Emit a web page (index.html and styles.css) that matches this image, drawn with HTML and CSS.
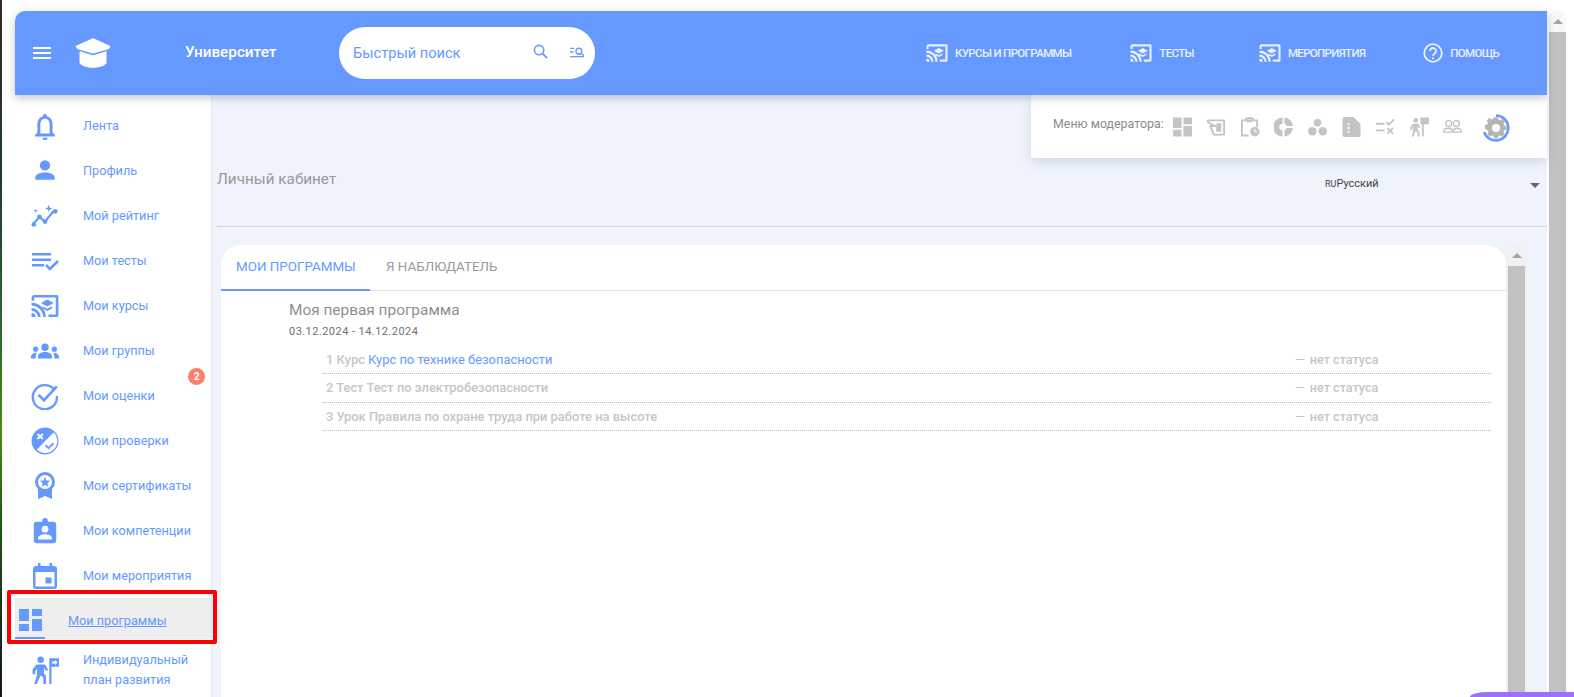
FILE: index.html
```html
<!DOCTYPE html>
<html lang="ru">
<head>
<meta charset="utf-8">
<title>Университет</title>
<link rel="stylesheet" href="styles.css">
</head>
<body>
<svg class="defs" width="0" height="0" aria-hidden="true">
  <symbol id="cast" viewBox="0 0 24 24"><path d="M3 2.500h19a1.500 1.500 0 0 1 1.500 1.500v16a1.500 1.500 0 0 1-1.500 1.500h-7v-2.300h6.200V4.800H2.800v2.700H.5V5A2.500 2.500 0 0 1 3 2.500z"/><path d="M.5 9.300A12.200 12.200 0 0 1 12.700 21.500h-2.400A9.800 9.800 0 0 0 .5 11.700zM.5 13.700a7.800 7.800 0 0 1 7.800 7.800H5.900A5.400 5.400 0 0 0 .5 16.100zM.5 18a3.500 3.500 0 0 1 3.500 3.500H.5z"/><path d="M14 6.500l5.500 3-5.500 3-5.500-3z"/><path d="M10 12.200l4 2.200 4-2.200v1.900l-4 2.200-4-2.200z"/></symbol>
</svg>
<div class="edge"></div>
<div class="window">
  <header class="topbar">
    <button class="burger" aria-label="Меню"><span></span><span></span><span></span></button>
    <svg class="logo" viewBox="0 0 36 30"><path fill="#fff" stroke="#fff" stroke-width="1.500" stroke-linejoin="round" d="M18 1L34.500 8.500 33 10.500 18 14.800 3 10.500 1.500 8.500z"/><path fill="#fff" stroke="#fff" stroke-width="1" stroke-linejoin="round" d="M5 13.800L18 17.800l13-4v11.500c-3 3-8.500 4-13 4s-10-1-13-4z"/></svg>
    <div class="brand">Университет</div>
    <div class="search">
      <span class="search-text">Быстрый поиск</span>
      <svg class="search-ico" viewBox="0 0 16 16"><circle cx="6.500" cy="6.500" r="5" fill="none" stroke="#6699ff" stroke-width="1.700"/><path d="M10.300 10.300L15 15" stroke="#6699ff" stroke-width="2"/></svg>
      <svg class="search-ico2" viewBox="0 0 16 12"><path d="M0 1.500h4.500M0 5.500h3.500M0 10.500h15" stroke="#6699ff" stroke-width="1.500"/><circle cx="9.500" cy="4.500" r="3.200" fill="none" stroke="#6699ff" stroke-width="1.500"/><path d="M11.800 6.800L15 9.500" stroke="#6699ff" stroke-width="1.700"/></svg>
    </div>
    <nav class="topnav">
      <a class="nav-a"><svg class="nav-ico"><use href="#cast"/></svg>КУРСЫ И ПРОГРАММЫ</a>
      <a class="nav-b"><svg class="nav-ico"><use href="#cast"/></svg>ТЕСТЫ</a>
      <a class="nav-c"><svg class="nav-ico"><use href="#cast"/></svg>МЕРОПРИЯТИЯ</a>
      <a class="nav-d"><svg class="nav-help" viewBox="0 0 20 20"><circle cx="10" cy="10" r="8.800" fill="none" stroke="currentColor" stroke-width="1.800"/><path d="M7 8a3 3 0 1 1 4.500 2.600c-1 .6-1.500 1-1.500 2.400" fill="none" stroke="currentColor" stroke-width="1.800"/><circle cx="10" cy="15.300" r="1.100" fill="currentColor"/></svg>ПОМОЩЬ</a>
    </nav>
  </header>
  <div class="body-row">
    <aside class="sidebar">
      <a class="item"><span class="ico"><svg viewBox="0 0 24 24"><path d="M12 1.500a1.600 1.600 0 0 1 1.600 1.600v.6C17 4.600 18.500 7.500 18.500 11v6.500l2 2V21h-17v-1.500l2-2V11c0-3.500 1.500-6.400 4.900-7.300v-.6A1.600 1.600 0 0 1 12 1.500zM8 18.500h8V11c0-3-1.300-5.200-4-5.200S8 8 8 11zM10 22h4a2 2 0 0 1-4 .6z"/></svg></span>Лента</a>
      <a class="item"><span class="ico"><svg viewBox="-3 -3 30 30"><circle cx="12" cy="6" r="5.500"/><path d="M1.500 21.500v-2C1.500 15 7 13.500 12 13.500s10.500 1.500 10.500 6v2z"/></svg></span>Профиль</a>
      <a class="item"><span class="ico"><svg viewBox="0 0 30 24"><path d="M2 21l7-8 6 5 9-11" fill="none" stroke="#6699ff" stroke-width="2.400"/><circle cx="3" cy="21" r="2.500"/><circle cx="9" cy="13" r="2.500"/><circle cx="15" cy="18" r="2.500"/><circle cx="26" cy="7" r="2.500"/><path d="M19 0l1 3 3 1-3 1-1 3-1-3-3-1 3-1zM5 4l.6 1.900 1.900.6-1.900.6L5 9l-.6-1.900-1.900-.6 1.900-.6z"/></svg></span>Мой рейтинг</a>
      <a class="item"><span class="ico"><svg viewBox="0 0 28 20"><path d="M1 2h19v2.500H1zM1 7.500h19V10H1zM1 13h12v2.500H1z"/><path d="M15 14l4 4 8-8" fill="none" stroke="#6699ff" stroke-width="2.600"/></svg></span>Мои тесты</a>
      <a class="item"><span class="ico ico-wide"><svg><use href="#cast"/></svg></span>Мои курсы</a>
      <a class="item"><span class="ico"><svg viewBox="0 0 30 16"><circle cx="15" cy="4" r="4"/><circle cx="5" cy="6" r="2.800"/><circle cx="25" cy="6" r="2.800"/><path d="M7.500 16v-2c0-3 3.500-4.800 7.500-4.800s7.500 1.800 7.500 4.800v2zM0 16v-1.500C0 12 2.500 10 5.500 10c.7 0 .5 1-.5 3v3zM30 16v-1.500C30 12 27.500 10 24.500 10c-.7 0-.5 1 .5 3v3z"/></svg></span>Мои группы</a>
      <a class="item"><span class="ico"><svg viewBox="0 0 26 26"><path d="M21.500 7A11.200 11.200 0 1 0 24 13" fill="none" stroke="#6699ff" stroke-width="2.200"/><path d="M7 12l5 5L24 4" fill="none" stroke="#6699ff" stroke-width="2.500"/></svg></span>Мои оценки<span class="badge">2</span></a>
      <a class="item"><span class="ico"><svg viewBox="0 0 26 26"><circle cx="13" cy="13" r="12.500"/><path d="M5.500 21L21 5A11 11 0 0 1 5.500 21z" fill="#fff"/><path d="M6 6.500l5 4.500M11 6.500L6 11" stroke="#fff" stroke-width="1.800"/><path d="M13.500 17l2.800 2.600L21 15" fill="none" stroke="#6699ff" stroke-width="1.800"/></svg></span>Мои проверки</a>
      <a class="item"><span class="ico"><svg viewBox="0 0 22 28"><path d="M4 17v10l7-3 7 3V17z"/><circle cx="11" cy="10" r="8.500" fill="#fff" stroke="#6699ff" stroke-width="3"/><path d="M11 5l1.500 3.400 3.700.3-2.800 2.400.9 3.600-3.300-1.900-3.300 1.900.9-3.600-2.800-2.400 3.700-.3z"/></svg></span>Мои сертификаты</a>
      <a class="item"><span class="ico"><svg viewBox="-2 -2 28 30"><path d="M3 3h6V2a3 3 0 0 1 6 0v1h6a3 3 0 0 1 3 3v17a3 3 0 0 1-3 3H3a3 3 0 0 1-3-3V6a3 3 0 0 1 3-3z"/><circle cx="12" cy="11" r="3.600" fill="#fff"/><path d="M4.500 22v-1.500c0-2.500 4.500-4 7.500-4s7.500 1.500 7.500 4V22z" fill="#fff"/></svg></span>Мои компетенции</a>
      <a class="item"><span class="ico"><svg viewBox="-2 -1 28 28"><path d="M5 0h2.500v3h9V0H19v3h2a3 3 0 0 1 3 3v17a3 3 0 0 1-3 3H3a3 3 0 0 1-3-3V6a3 3 0 0 1 3-3h2zM2.500 9v14.500h19V9z"/><path d="M12.500 14.500h6v6h-6z"/></svg></span>Мои мероприятия</a>
      <a class="item active"><span class="ico-active"><svg viewBox="0 0 23 22"><path d="M0 0h10v12H0zM13 0h10v7H13zM13 10h10v12H13zM0 15h10v7H0z"/></svg></span><span class="active-label">Мои программы</span></a>
      <a class="item two"><span class="ico"><svg viewBox="0 0 26 26"><circle cx="9" cy="3.500" r="3"/><path d="M5 8h8l3 5-2 1-2-3v5l2 2.500V26h-2.500v-6L9 18l-1.500 3-2 5H3l2.500-8V12L4 14v3H1.500v-4.500z"/><path d="M17 2h9v8h-7v16h-2z"/><path d="M19.500 5h3v-1.500l2 2.500-2 2.500V7h-3z" fill="#fff"/></svg></span><span class="two-text">Индивидуальный<br>план развития</span></a>
    </aside>
    <main class="main">
      <div class="mod-menu">
        <span class="mod-label">Меню модератора:</span>
        <svg class="m m1" viewBox="0 0 20 20"><path d="M0 0h9v11H0zM11 0h9v7h-9zM11 9h9v11h-9zM0 13h9v7H0z"/></svg>
        <svg class="m m2" viewBox="0 0 20 20"><path d="M1 3h17v15H7L3.500 9H9L1 5z" fill="none" stroke="#c4c4c4" stroke-width="2" stroke-linejoin="round"/><path d="M10 6h5v9H9.500z"/></svg>
        <svg class="m m3" viewBox="0 0 20 20"><path d="M1 3h4a4 2.500 0 0 1 8 0h4v7M1 2v17h7" fill="none" stroke="#c4c4c4" stroke-width="2"/><path d="M6 2h6v3H6z"/><circle cx="14.500" cy="15" r="5"/><path d="M14.500 12v3h2.500" stroke="#fff" fill="none"/></svg>
        <svg class="m m4" viewBox="0 0 20 20"><path d="M9 0v6.500A3.500 3.500 0 0 0 9 13.500V20A10 10 0 0 1 9 0zM11 0a10 10 0 0 1 9 9h-6.500A3.500 3.500 0 0 0 11 6.500zM13.500 11H20a10 10 0 0 1-9 9v-6.500a3.500 3.500 0 0 0 2.500-2.500z"/></svg>
        <svg class="m m5" viewBox="0 0 20 20"><circle cx="10" cy="5.500" r="4"/><circle cx="4.500" cy="14.500" r="4.500"/><circle cx="15.500" cy="14.500" r="4.500"/></svg>
        <svg class="m m6" viewBox="0 0 18 20"><path d="M2 0h9l7 7v11a2 2 0 0 1-2 2H2a2 2 0 0 1-2-2V2a2 2 0 0 1 2-2z"/><path d="M5 6h2v2H5zM5 10h2v2H5zM5 14h2v2H5z" fill="#fff"/></svg>
        <svg class="m m7" viewBox="0 0 20 20"><path d="M0 5.500h9v2H0zM0 12.500h9v2H0z"/><path d="M11 5l2.500 2.500L19 2M12 11l6 6M18 11l-6 6" fill="none" stroke="#c4c4c4" stroke-width="2"/></svg>
        <svg class="m m8" viewBox="0 0 20 20"><circle cx="6" cy="3" r="2.500"/><path d="M3 6.500h6l2 4-1.500.8L8 9v4l2 2v5H8v-4l-2-1.500L5 16l-1 4H2l1.500-7V9L2.500 11v2.500H.5V10zM11 0h9v7h-5.500v13h-2V7H11z"/></svg>
        <svg class="m m9" viewBox="0 0 22 20"><circle cx="6.500" cy="6" r="3.500" fill="none" stroke="#c4c4c4" stroke-width="1.600"/><circle cx="15.500" cy="6" r="3.500" fill="none" stroke="#c4c4c4" stroke-width="1.600"/><path d="M1 16v-1.500c0-2 3-3 5.500-3s4.500 1 4.500 3 2-3 4.500-3 5.500 1 5.500 3V16z" fill="none" stroke="#c4c4c4" stroke-width="1.600"/></svg>
        <svg class="m m10" viewBox="0 0 28 28"><path d="M14 1.500A12.500 12.500 0 1 1 2 18" fill="none" stroke="#6699ff" stroke-width="2.500"/><path fill="#b5b5b5" d="M12 5h4l.6 2.600 1.800.8 2.300-1.400 2.800 2.800-1.400 2.300.8 1.800 2.600.6v4l-2.600.6-.8 1.800 1.400 2.300-2.800 2.800-2.300-1.400-1.800.8-.6 2.600h-4l-.6-2.600-1.800-.8-2.300 1.400-2.800-2.800 1.400-2.300-.8-1.800L2 17.500v-4l2.600-.6.800-1.800L4 8.800 6.800 6l2.300 1.400 1.800-.8z" transform="translate(1 -1.500) scale(.93)"/><circle cx="14" cy="14" r="4" fill="#fff"/></svg>
      </div>
      <section class="page-head">
        <h1 class="page-title">Личный кабинет</h1>
        <div class="lang"><span class="lang-text"><span class="lang-code">RU</span>Русский</span><span class="lang-arrow"></span></div>
      </section>
      <hr class="rule">
      <div class="content-row">
        <div class="card">
          <div class="tabs">
            <div class="tab tab-on">МОИ ПРОГРАММЫ</div>
            <div class="tab">Я НАБЛЮДАТЕЛЬ</div>
          </div>
          <div class="program">
            <div class="prog-title">Моя первая программа</div>
            <div class="prog-date">03.12.2024 - 14.12.2024</div>
            <ul class="rows">
              <li class="row"><span>1 Курс <a class="row-link">Курс по технике безопасности</a></span><span class="status"><span class="dash">—</span>нет статуса</span></li>
              <li class="row"><span>2 Тест Тест по электробезопасности</span><span class="status"><span class="dash">—</span>нет статуса</span></li>
              <li class="row"><span>3 Урок Правила по охране труда при работе на высоте</span><span class="status"><span class="dash">—</span>нет статуса</span></li>
            </ul>
          </div>
        </div>
        <div class="scroll inner"><div class="scroll-btn"><span class="arrow"></span></div><div class="thumb"></div></div>
      </div>
    </main>
  </div>
</div>
<div class="scroll outer"><div class="scroll-btn"><span class="arrow"></span></div><div class="thumb"></div></div>
<div class="marker"></div>
<div class="chat-fab"></div>
</body>
</html>
```
FILE: styles.css
```css
* { box-sizing: border-box; }
html, body { height: 100%; }
body {
  margin: 0;
  height: 697px;
  overflow: hidden;
  display: flex;
  background: #fff;
  font-family: Roboto, "Liberation Sans", sans-serif;
  position: relative;
}
.defs { position: absolute; }
.edge {
  width: 2px;
  height: 697px;
  background: linear-gradient(180deg, #3a2a25 0%, #1a3a3a 25%, #2f6f2a 50%, #4d8a10 62%, #1f5a10 75%, #1a3a1a 85%, #101820 100%);
  flex: none;
}
.window {
  margin: 11px 0 0 13px;
  width: 1532px;
  height: 686px;
  display: flex;
  flex-direction: column;
  flex: none;
}
.topbar {
  height: 84px;
  flex: none;
  background: #6699ff;
  border-top-left-radius: 10px;
  display: flex;
  align-items: flex-start;
  position: relative;
  z-index: 3;
  box-shadow: 0 3px 8px rgba(60, 70, 100, .3);
  color: #fff;
}
.burger {
  background: none;
  border: 0;
  padding: 0;
  margin: 36px 0 0 18px;
  width: 18px;
  height: 12px;
  display: flex;
  flex-direction: column;
  justify-content: space-between;
}
.burger span { display: block; height: 2px; background: #fff; }
.logo { width: 36px; height: 30px; margin: 27px 0 0 24px; }
.brand { margin: 31px 0 0 74px; font-size: 15.300px; line-height: 20px; font-weight: 500; width: 154px; white-space: nowrap; }
.search {
  margin-top: 16px;
  width: 256px;
  height: 52px;
  border-radius: 26px;
  background: #fff;
  display: flex;
  align-items: center;
  padding-left: 14px;
}
.search-text { font-size: 14.600px; color: #6699ff; width: 180px; }
.search-ico { width: 15px; height: 15px; margin-top: -3px; }
.search-ico2 { width: 15px; height: 11px; margin-left: 22px; margin-top: -2px; }
.topnav { display: flex; margin: 31px 0 0 0; font-size: 11.500px; letter-spacing: -.65px; font-weight: 500; color: #e9f0ff; line-height: 20px; }
.topnav a { display: flex; align-items: center; gap: 7px; white-space: nowrap; }
.nav-a { margin-left: 331px; }
.nav-b { margin-left: 59px; }
.nav-c { margin-left: 65px; }
.nav-d { margin-left: 58px; }
.nav-ico { width: 22px; height: 22px; fill: #e9f0ff; }
.nav-help { width: 20px; height: 20px; }
.body-row { flex: 1; display: flex; min-height: 0; }
.sidebar {
  width: 197px;
  flex: none;
  background: #fff;
  border-right: 1px solid #e4e6ea;
  padding-top: 8px;
  position: relative;
  z-index: 1;
  overflow: hidden;
}
.item {
  height: 45px;
  display: flex;
  align-items: center;
  font-size: 12.700px;
  color: #6699ff;
  position: relative;
  white-space: nowrap;
}
.ico { width: 28px; height: 28px; margin: 0 24px 0 16px; display: flex; align-items: center; justify-content: center; flex: none; }
.ico svg { width: 100%; height: 100%; fill: #6699ff; }
.ico-wide svg { width: 28px; height: 28px; }
.badge {
  position: absolute;
  left: 173px;
  top: -5px;
  width: 17px;
  height: 17px;
  border-radius: 50%;
  background: #f9806c;
  color: #fff;
  font-size: 10px;
  font-weight: 700;
  text-align: center;
  line-height: 17px;
}
.active { background: #eeeeee; height: 41px; margin: 0 0 4px; width: 197px; }
.ico-active { width: 30px; height: 41px; border-bottom: 2px solid #6699ff; display: flex; align-items: flex-start; justify-content: flex-start; padding: 11px 0 0 4px; flex: none; margin-right: 23px; }
.ico-active svg { width: 23px; height: 22px; fill: #6699ff; }
.active-label { text-decoration: underline; margin-top: 4px; }
.two { height: 51px; align-items: center; line-height: 20px; margin-top: 3px; padding-top: 3px; }
.main {
  flex: 1;
  background: #eff3fb;
  position: relative;
  min-width: 0;
  padding-left: 5px;
}
.mod-menu {
  position: absolute;
  right: 0;
  top: 0;
  width: 516px;
  height: 63px;
  background: #fff;
  box-shadow: 0 4px 10px rgba(90, 110, 160, .2);
  z-index: 2;
  display: flex;
  align-items: flex-start;
  padding: 21px 0 0 22px;
}
.mod-label { font-size: 12.400px; color: #8c8c8c; line-height: 16px; width: 120px; flex: none; white-space: nowrap; }
.m { width: 19px; height: 20px; fill: #c4c4c4; flex: none; margin-right: 14.800px; margin-top: 1px; }
.m10 { width: 28px; height: 28px; margin: -2px 0 0 5px; }
.page-head { height: 131px; display: flex; position: relative; }
.page-title { margin: 74px 0 0; font-size: 15.300px; font-weight: 400; color: #999; line-height: 20px; flex: 1; }
.lang { width: 223px; display: flex; margin-top: 81px; height: 16px; font-size: 11px; color: #444; line-height: 16px; flex: none; }
.lang-text { flex: 1; padding-left: 1px; }
.lang-code { font-size: 9px; }
.lang-arrow { width: 0; height: 0; border: 5px solid transparent; border-top: 5px solid #666; border-bottom: 0; margin: 7px 7px 0 0; }
.rule { border: 0; border-top: 1px solid #cfd4e0; margin: 0; }
.content-row { display: flex; margin: 18px 0 0 4px; align-items: stretch; height: 452px; }
.card {
  width: 1285px;
  flex: none;
  background: #fff;
  border-radius: 20px 20px 0 0;
}
.tabs { height: 46px; border-bottom: 1px solid #e0e0e0; display: flex; }
.tab { font-size: 13.400px; color: #9a9a9a; padding: 0 15px; line-height: 43px; width: 149px; white-space: nowrap; height: 46px; }
.tab-on { color: #6699ff; border-bottom: 2px solid #6699ff; margin-right: 1px; }
.program { padding: 9px 15px 0 68px; }
.prog-title { font-size: 15.400px; color: #8f8f8f; line-height: 20px; }
.prog-date { font-size: 11px; color: #707070; line-height: 14px; margin-top: 5px; letter-spacing: .45px; }
.rows { list-style: none; margin: 7px 0 0 34px; padding: 0; }
.row {
  height: 28.300px;
  border-bottom: 1px dotted #bbb;
  display: flex;
  justify-content: space-between;
  font-size: 12.900px;
  line-height: 27px;
  color: #c6c6c6;
  padding-left: 3px;
  font-weight: 500;
}
.row-link { color: #6699ff; font-weight: 400; }
.status { width: 196px; font-size: 12.600px; }
.dash { margin-right: 5px; font-weight: 400; }
.scroll { flex: none; display: flex; flex-direction: column; background: #f1f1f1; }
.inner { width: 21px; margin-left: 0; padding: 0 2px; }
.scroll-btn { height: 21px; display: flex; align-items: center; justify-content: center; flex: none; }
.arrow { width: 0; height: 0; border: 5px solid transparent; border-bottom: 5px solid #a3a3a3; border-top: 0; }
.thumb { flex: 1; background: #c1c1c1; }
.outer { width: 17px; height: 686px; margin-top: 11px; background: #f7f7f7; margin-left: 2px; border-radius: 6px 6px 0 0; }
.marker {
  position: absolute;
  left: 7px;
  top: 590px;
  width: 210px;
  height: 54px;
  border: 4px solid #f00;
  border-radius: 2px;
  z-index: 5;
}
.chat-fab {
  position: absolute;
  left: 1470px;
  top: 692px;
  width: 104px;
  height: 5px;
  border-radius: 18px 0 0 0 / 5px 0 0 0;
  background: #9b70ff;
  z-index: 6;
}
```
